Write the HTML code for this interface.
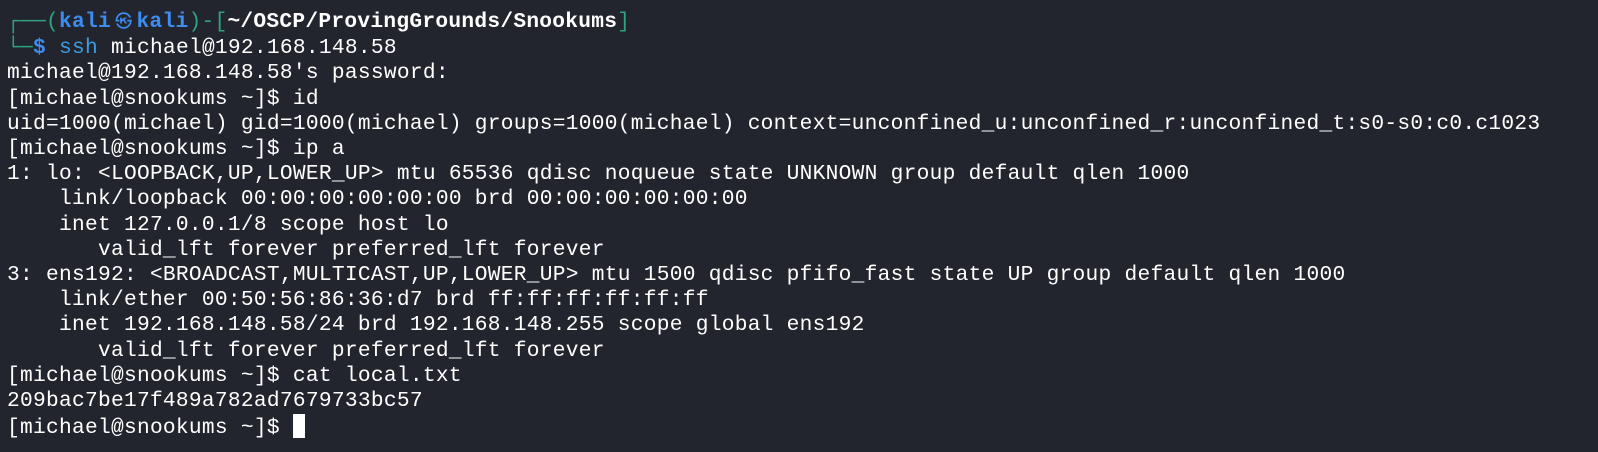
<!DOCTYPE html>
<html><head><meta charset="utf-8"><style>
html,body{margin:0;padding:0;background:#23252e;width:1598px;height:452px;overflow:hidden}
pre{margin:0;padding:10px 0 0 7px;font-family:"Liberation Mono","DejaVu Sans Mono",monospace;font-size:21.2px;letter-spacing:0.28px;line-height:25.2px;color:#ffffff;white-space:pre}
.g{color:#2fa37e}.b{color:#3d8cf0;font-weight:bold}.w{font-weight:bold;color:#fff}.c{color:#3d9be0}
.sym{display:inline-block;width:25.5px;text-align:center;font-size:17px;font-weight:normal}
.cur{display:inline-block;width:12px;height:24px;background:#fff;vertical-align:-5px}
</style></head><body><pre><span class="g">┌──(</span><span class="b">kali<span class="sym">㉿</span>kali</span><span class="g">)-[</span><span class="w">~/OSCP/ProvingGrounds/Snookums</span><span class="g">]</span>
<span class="g">└─</span><span class="b">$</span> <span class="c">ssh</span> michael@192.168.148.58
michael@192.168.148.58's password: 
[michael@snookums ~]$ id
uid=1000(michael) gid=1000(michael) groups=1000(michael) context=unconfined_u:unconfined_r:unconfined_t:s0-s0:c0.c1023
[michael@snookums ~]$ ip a
1: lo: &lt;LOOPBACK,UP,LOWER_UP&gt; mtu 65536 qdisc noqueue state UNKNOWN group default qlen 1000
    link/loopback 00:00:00:00:00:00 brd 00:00:00:00:00:00
    inet 127.0.0.1/8 scope host lo
       valid_lft forever preferred_lft forever
3: ens192: &lt;BROADCAST,MULTICAST,UP,LOWER_UP&gt; mtu 1500 qdisc pfifo_fast state UP group default qlen 1000
    link/ether 00:50:56:86:36:d7 brd ff:ff:ff:ff:ff:ff
    inet 192.168.148.58/24 brd 192.168.148.255 scope global ens192
       valid_lft forever preferred_lft forever
[michael@snookums ~]$ cat local.txt
209bac7be17f489a782ad7679733bc57
[michael@snookums ~]$ <span class="cur"></span></pre></body></html>
